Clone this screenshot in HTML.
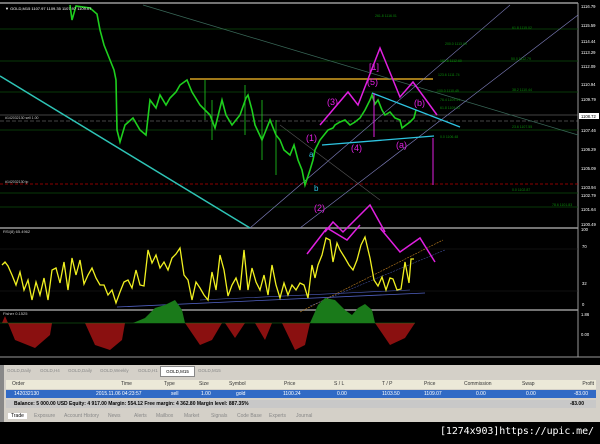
<!DOCTYPE html>
<html><head><meta charset="utf-8"><style>
body{margin:0;width:600px;height:444px;background:#000;overflow:hidden;font-family:"Liberation Sans",sans-serif;position:relative}
.a{position:absolute}
.row{position:absolute;left:4px;width:592px;font-size:5px;overflow:hidden}
.row span{position:absolute;top:1px;white-space:nowrap}
</style></head><body>
<svg class="a" style="left:0;top:0" width="600" height="360" viewBox="0 0 600 360">
<rect x="0" y="0" width="600" height="360" fill="#000"/>
<line x1="0" y1="3" x2="578" y2="3" stroke="#999" stroke-width="1.5"/>
<line x1="0" y1="228" x2="578" y2="228" stroke="#999" stroke-width="1.5"/>
<line x1="0" y1="310" x2="578" y2="310" stroke="#999" stroke-width="1.5"/>
<line x1="0" y1="357" x2="600" y2="357" stroke="#999" stroke-width="1"/>
<line x1="578" y1="3" x2="578" y2="357" stroke="#999" stroke-width="1"/>
<g stroke="#0a4a0a" stroke-width="0.8">
<line x1="0" y1="29" x2="578" y2="29"/><line x1="0" y1="61" x2="578" y2="61"/>
<line x1="0" y1="92" x2="578" y2="92"/><line x1="0" y1="130" x2="578" y2="130"/>
<line x1="0" y1="193" x2="578" y2="193"/><line x1="0" y1="207" x2="578" y2="207"/>
</g>
<line x1="0" y1="115" x2="578" y2="115" stroke="#888" stroke-width="0.6"/>
<line x1="0" y1="121" x2="578" y2="121" stroke="#888" stroke-width="0.6" stroke-dasharray="4,2"/>
<line x1="0" y1="184" x2="578" y2="184" stroke="#b00" stroke-width="0.8" stroke-dasharray="3,2"/>
<line x1="190" y1="79" x2="433" y2="79" stroke="#d4a020" stroke-width="1.5"/>
<line x1="0" y1="76" x2="250" y2="228" stroke="#2ec4b6" stroke-width="1.5"/>
<line x1="143" y1="5" x2="578" y2="135" stroke="#3a6a5a" stroke-width="0.7"/>
<line x1="250" y1="228" x2="510" y2="5" stroke="#8080c0" stroke-width="0.6"/>
<line x1="300" y1="228" x2="578" y2="15" stroke="#8080c0" stroke-width="0.6"/>
<line x1="280" y1="125" x2="380" y2="200" stroke="#555" stroke-width="0.6"/>
<polyline fill="none" stroke="#1ecf1e" stroke-width="1.6" points="70,5 72,20 76,6 90,8 97,14 100,30 104,45 110,60 114,70 116,80 117,130 120,142 125,125 133,118 140,130 146,135 150,100 156,108 160,95 166,105 170,98 176,92 180,85 187,80 192,92 200,105 205,110 210,115 215,128 222,100 226,115 232,125 240,115 246,98 248,95 252,110 255,125 262,140 266,130 270,120 276,135 280,140 284,150 290,155 294,145 298,160 302,170 305,185 310,170 313,160 315,150 320,140 324,135 328,130 333,128 335,125 340,122 345,120 350,125 355,122 360,118 365,110 370,100 372,95 375,104 378,100 382,110 385,115 390,112 395,118 400,120 402,128 406,125 410,122 414,118 416,110"/>
<g stroke="#1ecf1e" stroke-width="0.8">
<line x1="205" y1="80" x2="205" y2="120"/><line x1="245" y1="85" x2="245" y2="135"/><line x1="262" y1="100" x2="262" y2="160"/><line x1="276" y1="120" x2="276" y2="175"/><line x1="212" y1="100" x2="212" y2="140"/>
</g>
<line x1="322" y1="145" x2="434" y2="136" stroke="#2ec4e0" stroke-width="1.3"/>
<line x1="372" y1="93" x2="460" y2="127" stroke="#2ec4e0" stroke-width="1.3"/>
<polyline fill="none" stroke="#e020e0" stroke-width="1.5" points="320,125 348,92 358,105 380,48 400,97 413,82 437,115"/>
<line x1="374" y1="93" x2="374" y2="137" stroke="#e020e0" stroke-width="1"/>
<line x1="433" y1="138" x2="433" y2="185" stroke="#e020e0" stroke-width="1"/>
<polyline fill="none" stroke="#e020e0" stroke-width="1.5" points="325,232 333,222 343,232 370,205 385,232"/>
<g fill="#e020e0" font-size="9" font-family="Liberation Sans">
<text x="306" y="141">(1)</text><text x="327" y="105">(3)</text><text x="351" y="151">(4)</text><text x="367" y="85">(5)</text><text x="369" y="70">[1]</text><text x="414" y="106">(b)</text><text x="396" y="148">(a)</text><text x="314" y="211">(2)</text>
</g>
<text x="309" y="157" fill="#2ec4e0" font-size="8">a</text><text x="314" y="191" fill="#2ec4e0" font-size="8">b</text>
<g fill="#0a8a0a" font-size="3.5" font-family="Liberation Sans">
<text x="375" y="17">261.8 1116.01</text><text x="512" y="29">61.8 1115.02</text><text x="445" y="45">200.0 1113.99</text><text x="440" y="62">161.8 1112.60</text><text x="511" y="60">50.0 1112.79</text><text x="438" y="76">123.6 1111.74</text><text x="437" y="92">100.0 1110.45</text><text x="512" y="91">38.2 1110.44</text><text x="440" y="101">76.4 1109.51</text><text x="440" y="109">61.8 1109.02</text><text x="512" y="128">23.6 1107.55</text><text x="440" y="138">0.0 1106.48</text><text x="512" y="191">0.0 1102.87</text><text x="552" y="206">78.6 1101.83</text>
</g>
<g fill="#fff" font-size="4.2" font-family="Liberation Sans">
<text x="581" y="8">1116.79</text><text x="581" y="27">1115.59</text><text x="581" y="43">1114.44</text><text x="581" y="54">1113.29</text><text x="581" y="68">1112.09</text><text x="581" y="86">1110.94</text><text x="581" y="101">1109.79</text><text x="581" y="132">1107.46</text><text x="581" y="151">1106.29</text><text x="581" y="170">1105.09</text><text x="581" y="189">1103.94</text><text x="581" y="197">1102.79</text><text x="581" y="211">1101.64</text><text x="581" y="226">1100.49</text>
<text x="582" y="248">70</text><text x="582" y="285">32</text><text x="582" y="306">0</text><text x="581" y="231">100</text><text x="581" y="316">1.86</text><text x="581" y="336">0.00</text>
</g>
<rect x="579" y="113" width="20" height="6" fill="#fff"/><text x="581" y="118" font-size="4.2" fill="#000">1108.72</text>
<text x="5" y="10" fill="#fff" font-size="4">▼ GOLD,M15  1107.97 1109.35 1107.97 1109.07</text>
<text x="5" y="119" fill="#ccc" font-size="3.5">#142032130 sell 1.00</text>
<text x="5" y="183" fill="#ccc" font-size="3.5">#142032130 tp</text>
<text x="3" y="233" fill="#ccc" font-size="4">RSI(8) 65.4962</text>
<text x="3" y="315" fill="#ccc" font-size="4">Fisher 0.1525</text>
<line x1="0" y1="249" x2="578" y2="249" stroke="#222" stroke-width="0.6"/>
<line x1="0" y1="291" x2="578" y2="291" stroke="#222" stroke-width="0.6"/>
<line x1="117" y1="307" x2="425" y2="293" stroke="#5060c0" stroke-width="0.8"/>
<line x1="200" y1="300" x2="410" y2="290" stroke="#5060c0" stroke-width="0.6"/>
<line x1="300" y1="312" x2="443" y2="240" stroke="#c08020" stroke-width="0.6" stroke-dasharray="2,1"/>
<line x1="310" y1="306" x2="445" y2="250" stroke="#5060c0" stroke-width="0.5" stroke-dasharray="2,1"/>
<polyline fill="none" stroke="#f0f020" stroke-width="1.3" points="2,265 5,262 8,266 12,275 16,285 20,272 24,290 28,280 32,300 36,282 40,295 44,278 48,300 52,270 56,268 60,283 64,262 68,290 72,258 76,275 80,260 84,284 88,275 92,268 96,278 100,285 104,285 108,295 112,290 116,303 120,292 124,282 128,280 132,288 136,270 140,285 144,286 148,250 152,263 156,255 160,268 164,262 168,270 172,258 176,254 180,248 184,275 188,280 192,300 196,282 200,288 204,295 208,300 212,272 216,290 220,255 224,270 228,296 232,285 236,278 240,290 244,250 248,290 252,268 256,282 260,290 264,275 268,295 272,265 276,285 280,298 284,283 288,295 292,285 296,290 300,283 304,285 308,298 312,265 315,278 318,265 322,255 326,238 330,240 333,262 337,243 340,250 345,258 349,265 353,270 357,260 361,245 365,237 370,258 374,280 378,286 382,277 386,290 390,278 393,279 397,290 401,289 405,262 409,283 411,259 414,259"/>
<polyline fill="none" stroke="#e020e0" stroke-width="1.5" points="307,254 327,228 347,240 360,225"/>
<polyline fill="none" stroke="#e020e0" stroke-width="1.5" points="380,228 400,252 420,238 435,262"/>
<path d="M2,323 L5,316 L8,323 L15,340 L35,348 L50,335 L52,323 Z" fill="#8a1010"/>
<path d="M85,323 L95,345 L110,350 L122,340 L125,323 Z" fill="#8a1010"/>
<path d="M185,323 L200,345 L212,340 L222,323 Z" fill="#8a1010"/>
<path d="M225,323 L235,338 L245,323 Z M255,323 L265,340 L272,323 Z M282,323 L295,350 L305,345 L310,323 Z M375,323 L390,345 L405,338 L415,323 Z" fill="#8a1010"/>
<path d="M133,323 L145,318 L155,308 L165,305 L175,300 L182,310 L185,323 Z" fill="#1a7a1a"/>
<path d="M310,323 L318,305 L325,298 L335,300 L345,310 L352,315 L358,308 L365,304 L372,310 L375,323 Z" fill="#1a7a1a"/>
<line x1="0" y1="323" x2="415" y2="323" stroke="#1a7a1a" stroke-width="0.6"/>
<g fill="#ddd" font-size="3.6" font-family="Liberation Sans">
<text x="2" y="363">4 Nov 2015</text><text x="31" y="363">4 Nov 10:45</text><text x="62" y="363">4 Nov 12:45</text><text x="94" y="363">4 Nov 16:45</text><text x="126" y="363">4 Nov 20:45</text><text x="158" y="363">5 Nov 01:45</text><text x="190" y="363">5 Nov 05:45</text><text x="222" y="363">5 Nov 09:45</text><text x="254" y="363">5 Nov 13:45</text><text x="286" y="363">5 Nov 17:45</text><text x="302" y="363">5 Nov 21:45</text><text x="334" y="363">6 Nov 02:45</text><text x="366" y="363">6 Nov 06:45</text><text x="394" y="363">6 Nov 10:45</text>
</g>
</svg>
<div class="a" style="left:0;top:365px;width:600px;height:57px;background:#d4d0c8"></div>
<div class="a" style="left:5px;top:366px;width:590px;height:10px;font-size:4.5px;color:#888;line-height:10px">
<span class="a" style="left:2px">GOLD,Daily</span><span class="a" style="left:35px">GOLD,H4</span><span class="a" style="left:63px">GOLD,Daily</span><span class="a" style="left:95px">GOLD,Weekly</span><span class="a" style="left:133px">GOLD,H1</span>
<span class="a" style="left:155px;top:0;height:9px;width:33px;background:#fff;border:1px solid #888;color:#000;text-align:center;line-height:9px">GOLD,M15</span><span class="a" style="left:193px">GOLD,M15</span></div>
<div class="a" style="left:6px;top:380px;width:590px;height:9px;background:#ece9d8"></div>
<div class="row" style="top:380px;height:9px;color:#333">
<span style="left:8px">Order</span><span style="left:117px">Time</span><span style="left:160px">Type</span><span style="left:195px">Size</span><span style="left:225px">Symbol</span><span style="left:280px">Price</span><span style="left:330px">S / L</span><span style="left:378px">T / P</span><span style="left:420px">Price</span><span style="left:460px">Commission</span><span style="left:518px">Swap</span><span style="right:2px">Profit</span></div>
<div class="row" style="top:390px;height:8px;background:#316ac5;color:#fff;left:6px;width:590px">
<span style="left:8px">142032130</span><span style="left:90px">2015.11.06 04:23:57</span><span style="left:165px">sell</span><span style="left:195px">1.00</span><span style="left:230px">gold</span><span style="left:277px">1100.24</span><span style="left:331px">0.00</span><span style="left:376px">1103.50</span><span style="left:418px">1109.07</span><span style="left:470px">0.00</span><span style="left:520px">0.00</span><span style="right:8px">-83.00</span></div>
<div class="row" style="top:400px;height:8px;background:#c8c8c8;color:#000;font-weight:bold;left:6px;width:590px">
<span style="left:8px">Balance: 5 000.00 USD  Equity: 4 917.00  Margin: 554.12  Free margin: 4 362.80  Margin level: 887.35%</span><span style="right:12px">-83.00</span></div>
<div class="row" style="top:412px;height:9px;color:#888">
<span style="left:4px;color:#000;background:#fff;padding:0 3px">Trade</span><span style="left:30px">Exposure</span><span style="left:60px">Account History</span><span style="left:104px">News</span><span style="left:130px">Alerts</span><span style="left:152px">Mailbox</span><span style="left:180px">Market</span><span style="left:207px">Signals</span><span style="left:233px">Code Base</span><span style="left:265px">Experts</span><span style="left:292px">Journal</span></div>
<div class="a" style="left:0;top:365px;width:4px;height:57px;background:#888"></div>
<div class="a" style="left:440px;top:426px;color:#fff;font-size:10px;font-family:'DejaVu Sans Mono','Liberation Mono',monospace;white-space:nowrap;letter-spacing:-0.1px">[1274x903]https://upic.me/</div>
</body></html>
